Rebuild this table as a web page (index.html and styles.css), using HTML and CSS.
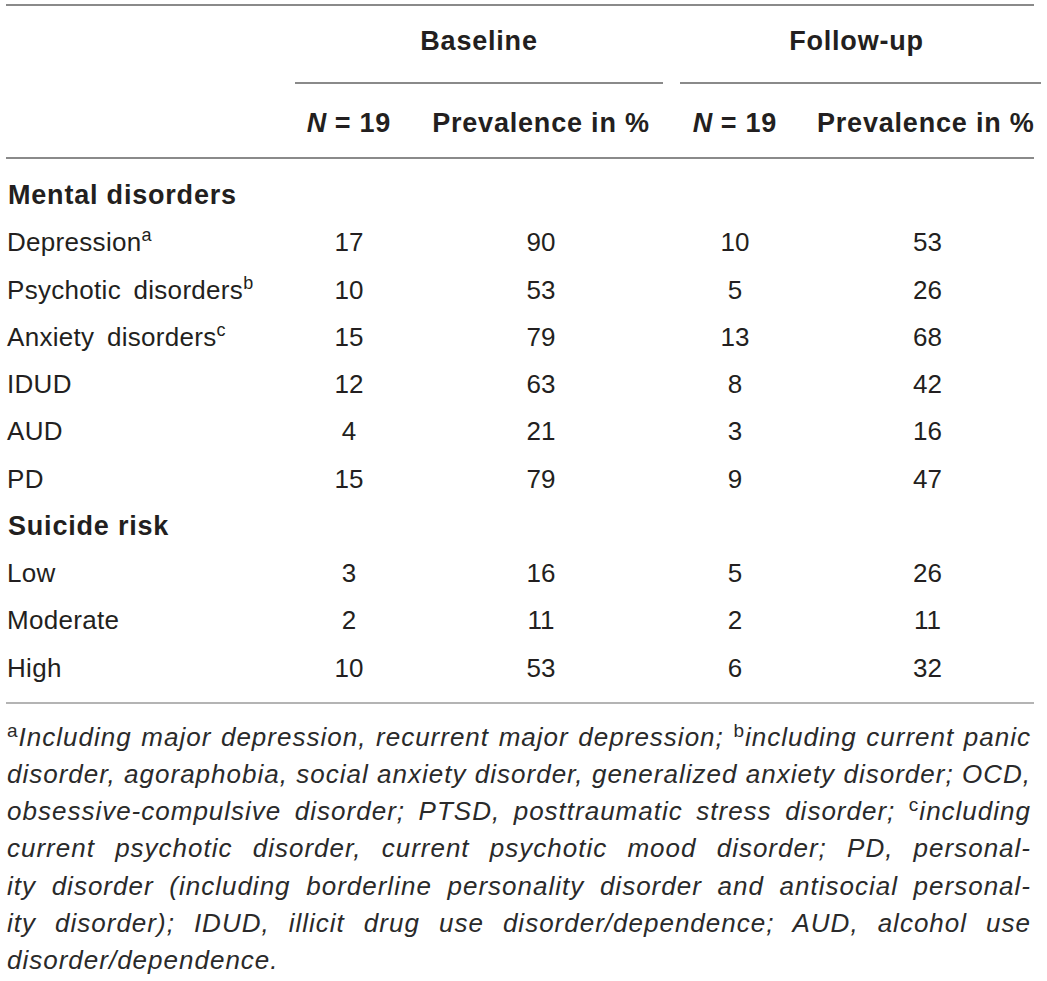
FILE: index.html
```html
<!DOCTYPE html>
<html lang="en">
<head>
<meta charset="utf-8">
<title>Prevalence of mental disorders and suicide risk</title>
<link rel="stylesheet" href="styles.css">
</head>
<body>
<div class="page">
  <table class="data">
    <colgroup>
      <col class="c-label">
      <col class="c-n1">
      <col class="c-p1">
      <col class="c-n2">
      <col class="c-p2">
    </colgroup>
    <thead>
      <tr class="group-row">
        <th></th>
        <th colspan="2" class="group"><div class="group-label base">Baseline</div></th>
        <th colspan="2" class="group"><div class="group-label follow">Follow-up</div></th>
      </tr>
      <tr class="sub-row">
        <th></th>
        <th class="n1"><i>N</i> = 19</th>
        <th class="p1">Prevalence in %</th>
        <th class="n2"><i>N</i> = 19</th>
        <th class="p2">Prevalence in %</th>
      </tr>
    </thead>
    <tbody>
      <tr class="section first"><th colspan="5">Mental disorders</th></tr>
      <tr><td class="lbl">Depression<sup>a</sup></td><td class="n1">17</td><td class="p1">90</td><td class="n2">10</td><td class="p2">53</td></tr>
      <tr><td class="lbl">Psychotic disorders<sup>b</sup></td><td class="n1">10</td><td class="p1">53</td><td class="n2">5</td><td class="p2">26</td></tr>
      <tr><td class="lbl">Anxiety disorders<sup>c</sup></td><td class="n1">15</td><td class="p1">79</td><td class="n2">13</td><td class="p2">68</td></tr>
      <tr><td class="lbl">IDUD</td><td class="n1">12</td><td class="p1">63</td><td class="n2">8</td><td class="p2">42</td></tr>
      <tr><td class="lbl">AUD</td><td class="n1">4</td><td class="p1">21</td><td class="n2">3</td><td class="p2">16</td></tr>
      <tr><td class="lbl">PD</td><td class="n1">15</td><td class="p1">79</td><td class="n2">9</td><td class="p2">47</td></tr>
      <tr class="section"><th colspan="5">Suicide risk</th></tr>
      <tr><td class="lbl">Low</td><td class="n1">3</td><td class="p1">16</td><td class="n2">5</td><td class="p2">26</td></tr>
      <tr><td class="lbl">Moderate</td><td class="n1">2</td><td class="p1">11</td><td class="n2">2</td><td class="p2">11</td></tr>
      <tr class="last"><td class="lbl">High</td><td class="n1">10</td><td class="p1">53</td><td class="n2">6</td><td class="p2">32</td></tr>
    </tbody>
  </table>
  <div class="notes">
    <span class="line"><sup>a</sup>Including major depression, recurrent major depression; <sup>b</sup>including current panic</span>
    <span class="line">disorder, agoraphobia, social anxiety disorder, generalized anxiety disorder; OCD,</span>
    <span class="line">obsessive-compulsive disorder; PTSD, posttraumatic stress disorder; <sup>c</sup>including</span>
    <span class="line">current psychotic disorder, current psychotic mood disorder; PD, personal-</span>
    <span class="line">ity disorder (including borderline personality disorder and antisocial personal-</span>
    <span class="line">ity disorder); IDUD, illicit drug use disorder/dependence; AUD, alcohol use</span>
    <span class="line end">disorder/dependence.</span>
  </div>
</div>
</body>
</html>
```
FILE: styles.css
```css
html, body {
  margin: 0;
  padding: 0;
  background: #ffffff;
}

.page {
  padding: 4px 0 0 6px;
  width: 1028px;
  font-family: "Liberation Sans", Arial, Helvetica, sans-serif;
  color: #231f20;
}

.data {
  width: 1028px;
  table-layout: fixed;
  border-collapse: collapse;
  border-top: 2px solid #8a8a8a;
  border-bottom: 2px solid #b4b4b4;
  font-size: 26px;
}

.c-label { width: 289px; }
.c-n1 { width: 108px; }
.c-p1 { width: 276px; }
.c-n2 { width: 112px; }
.c-p2 { width: 243px; }

.data th,
.data td {
  padding: 0;
  white-space: nowrap;
}

.data thead th {
  font-weight: bold;
  font-size: 27px;
  letter-spacing: 0.8px;
  text-align: center;
}

.data thead i {
  font-style: italic;
  letter-spacing: 0;
}

.group-row th {
  vertical-align: bottom;
}

.group-label {
  line-height: 70px;
  padding-bottom: 6px;
  border-bottom: 2px solid #8a8a8a;
}

.group-label.base {
  margin-right: 16px;
}

.group-label.follow {
  margin-left: 1px;
  margin-right: -7px;
  padding-right: 8px;
}

.sub-row th {
  line-height: 67px;
  padding-top: 6px;
  border-bottom: 2px solid #8a8a8a;
}

.sub-row th.p2 {
  padding-left: 26px;
  padding-right: 0;
}

.data tbody td,
.data tbody th {
  line-height: 47.25px;
}

.section th {
  text-align: left;
  font-weight: bold;
  font-size: 27px;
  letter-spacing: 0.8px;
  padding-left: 2px;
}

.first th,
.first td {
  padding-top: 13px;
}

.last td {
  padding-bottom: 10px;
}

td.lbl {
  padding-left: 1px;
  letter-spacing: 0.3px;
  word-spacing: 5px;
}

td.n1, td.p1, td.n2, td.p2 {
  text-align: center;
}

td.p2 { padding-left: 30px; }

.data sup {
  font-size: 18px;
  line-height: 0;
  vertical-align: baseline;
  position: relative;
  top: -10px;
  letter-spacing: 0;
}

.notes {
  margin-top: 15px;
  width: 1024px;
  padding-left: 1px;
  font-size: 26px;
  letter-spacing: 1px;
  line-height: 37.2px;
  font-style: italic;
  color: #2a2a2a;
}

.notes .line {
  display: block;
  text-align: justify;
  text-align-last: justify;
}

.notes .line.end {
  text-align: left;
  text-align-last: left;
}

.notes sup {
  font-style: normal;
  font-size: 19px;
  line-height: 0;
  vertical-align: baseline;
  position: relative;
  top: -9px;
  letter-spacing: 0;
  margin-right: 1px;
}
```
